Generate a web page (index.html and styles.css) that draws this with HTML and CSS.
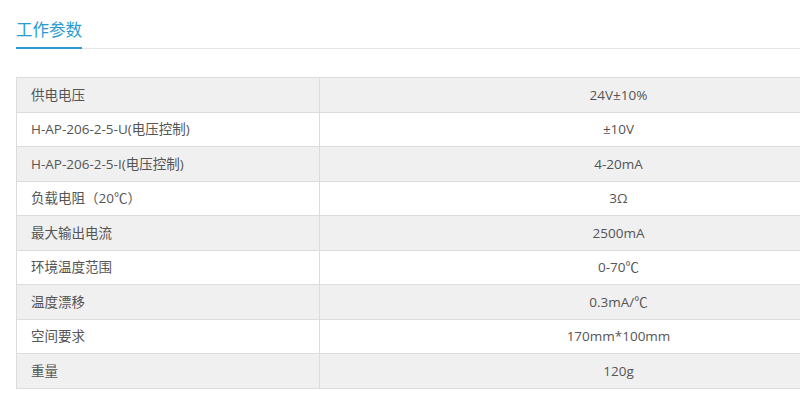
FILE: index.html
```html
<!DOCTYPE html>
<html lang="zh">
<head>
<meta charset="utf-8">
<title>工作参数</title>
<link rel="stylesheet" href="styles.css">
</head>
<body>
<div class="page">
  <div class="tabbar">
    <div class="tab">工作参数</div>
  </div>
  <table class="params">
    <colgroup><col class="c1"><col class="c2"></colgroup>
    <tbody>
      <tr><td>供电电压</td><td>24V±10%</td></tr>
      <tr><td>H-AP-206-2-5-U(电压控制)</td><td>±10V</td></tr>
      <tr><td>H-AP-206-2-5-I(电压控制)</td><td>4-20mA</td></tr>
      <tr><td>负载电阻（20℃）</td><td>3Ω</td></tr>
      <tr><td>最大输出电流</td><td>2500mA</td></tr>
      <tr><td>环境温度范围</td><td>0-70℃</td></tr>
      <tr><td>温度漂移</td><td>0.3mA/℃</td></tr>
      <tr><td>空间要求</td><td>170mm*100mm</td></tr>
      <tr><td>重量</td><td>120g</td></tr>
    </tbody>
  </table>
</div>
</body>
</html>
```

FILE: styles.css
```css
html, body {
  margin: 0;
  padding: 0;
  background: #fff;
  overflow: hidden;
}
body {
  font-family: "Open Sans", "Noto Sans CJK SC", sans-serif;
  color: #555;
}
.page {
  padding: 15px 0 0 16px;
  overflow: hidden;
}
.tabbar {
  border-bottom: 1px solid #e6e6e6;
  display: flex;
  margin-bottom: 28px;
}
.tab {
  font-size: 16.5px;
  line-height: 30px;
  color: #2a9bd0;
  padding-bottom: 2px;
  border-bottom: 2px solid #2a9bd0;
  margin-bottom: -1px;
}
.params {
  border-collapse: collapse;
  width: 902px;
  table-layout: fixed;
  font-size: 13.5px;
}
.params col.c1 { width: 303px; }
.params td {
  border: 1px solid #dcdcdc;
  height: 34.5px;
  padding: 0 14px;
  box-sizing: border-box;
  line-height: 18px;
}
.params td:first-child { text-align: left; }
.params td:last-child { text-align: center; }
.params tr:nth-child(odd) td { background: #f0f0f0; }
.params tr:nth-child(even) td { background: #fff; }
```
